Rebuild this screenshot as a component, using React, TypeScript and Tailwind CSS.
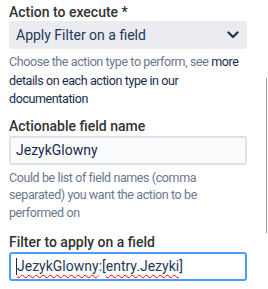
import React from "react";

export default function App() {
  return (
    <div
      className="relative w-[268px] h-[289px] overflow-hidden bg-white pl-[9px] pr-[21px] text-[#172B4D]"
      style={{ fontFamily: "Roboto, 'Noto Sans', sans-serif" }}
    >
      <div className="pt-[3px] text-[14px] leading-[18px] font-medium text-[#333333]">Action to execute *</div>
      <div className="mt-[0px] flex h-[28px] items-center justify-between rounded-[3px] bg-[#EBECF0] pl-[7px] pr-[8px]">
        <span className="text-[14px] text-[#253858]">Apply Filter on a field</span>
        <svg width="12" height="8" viewBox="0 0 12 8">
          <path d="M1.5 1.5 L6 6 L10.5 1.5" fill="none" stroke="#253858" strokeWidth="2.4" strokeLinecap="round" strokeLinejoin="round" />
        </svg>
      </div>
      <p className="mt-[4px] text-[12.5px] leading-[18.5px] tracking-[-0.4px] text-[#6B778C]">
        Choose the action type to perform, see{" "}
        <span className="text-[#172B4D]">more details on each action type in our documentation</span>
      </p>
      <div className="mt-[8px] text-[14px] leading-[19px] font-medium text-[#333333]">Actionable field name</div>
      <div className="mt-[0px] flex h-[29px] items-center rounded-[3px] border-2 border-[#DFE1E6] bg-[#FAFBFC] px-[5px]">
        <span className="text-[14px] text-[#172B4D]">JezykGlowny</span>
      </div>
      <p className="mt-[4px] text-[12.5px] leading-[17.5px] tracking-[-0.4px] text-[#6B778C]">
        Could be list of field names (comma separated) you want the action to be performed on
      </p>
      <div className="mt-[12px] text-[14px] leading-[19px] font-medium text-[#333333]">Filter to apply on a field</div>
      <div className="mt-[0px] flex h-[29px] items-center rounded-[3px] border-2 border-[#4C9AFF] bg-white px-[5px]">
        <span className="inline-block h-[17px] w-[1px] bg-[#172B4D]" />
        <span className="text-[14px] text-[#253858]">
          <span className="underline decoration-wavy decoration-[#ff0000] decoration-1 underline-offset-[3px]">JezykGlowny</span>:[
          <span className="underline decoration-wavy decoration-[#ff0000] decoration-1 underline-offset-[3px]">entry.Jezyki</span>]
        </span>
      </div>
      <div className="absolute left-[266px] top-[78px] h-[155px] w-[1px] bg-[#9a9a9a]" />
    </div>
  );
}
